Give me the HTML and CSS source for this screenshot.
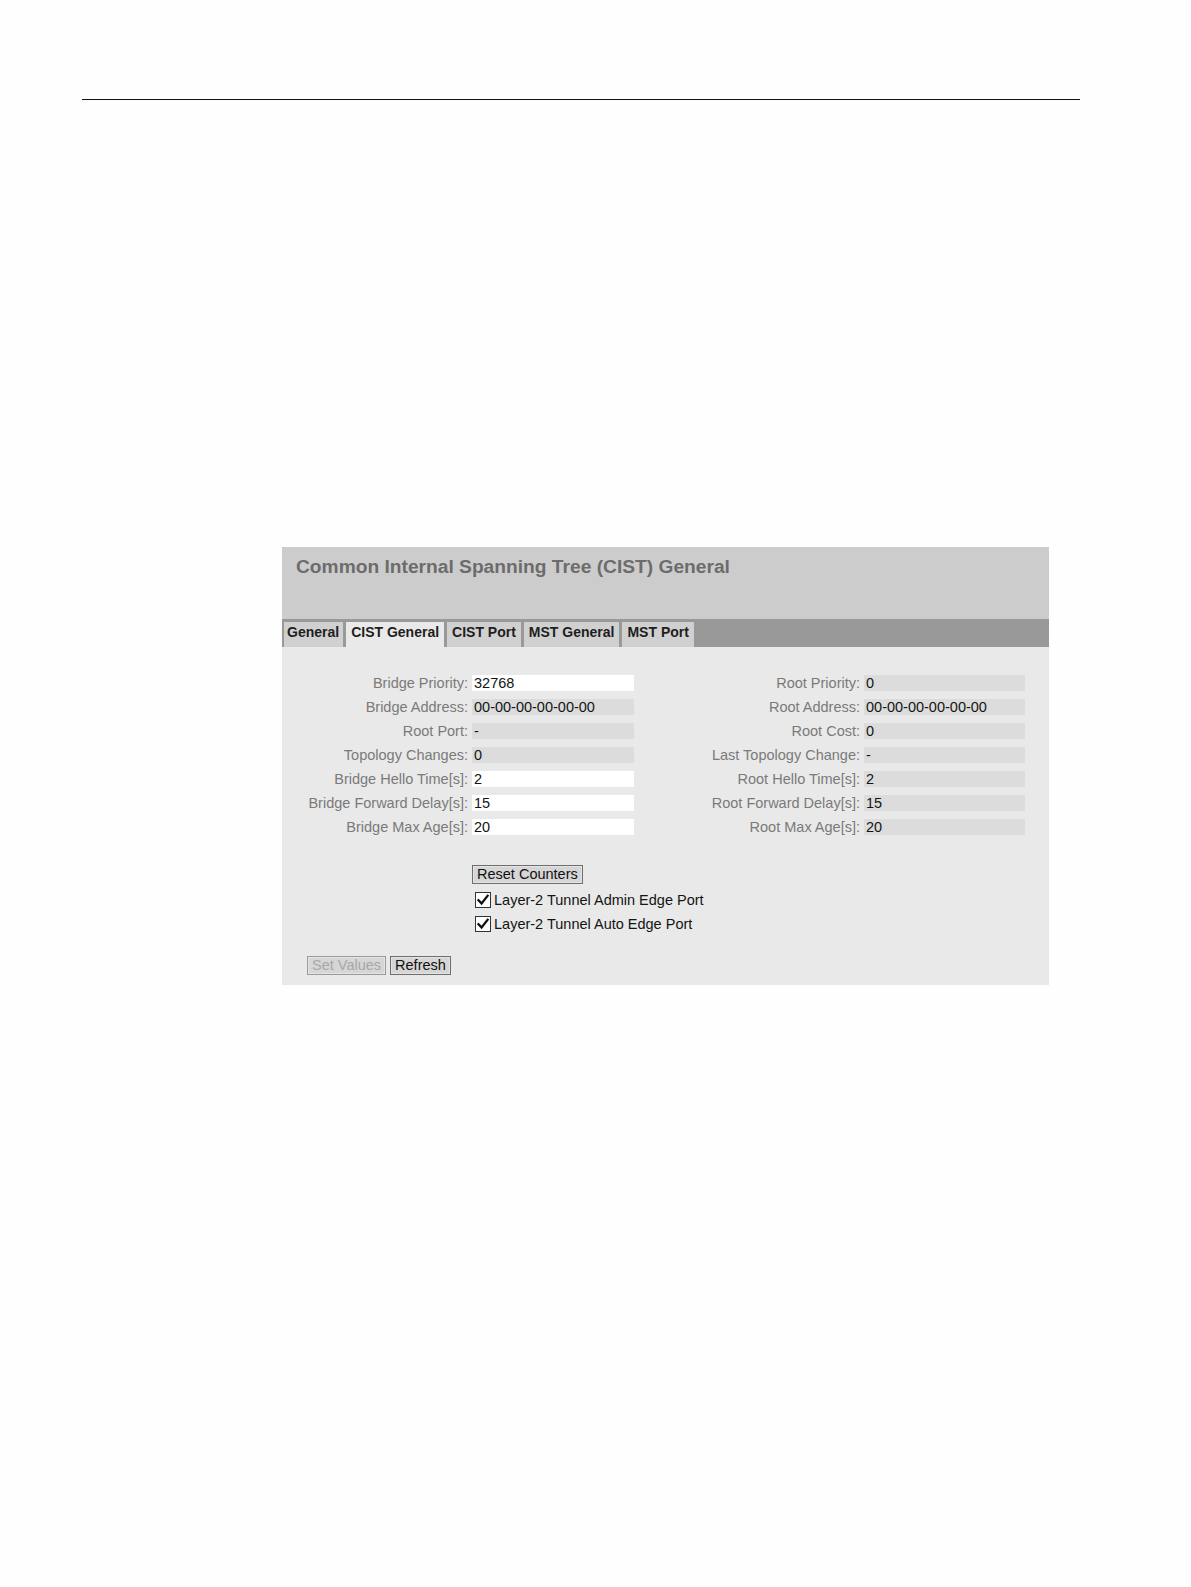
FILE: index.html
```html
<!DOCTYPE html>
<html lang="en">
<head>
<meta charset="utf-8">
<title>CIST General</title>
<link rel="stylesheet" href="styles.css">
</head>
<body>
<div class="page">
  <div class="rule"></div>
  <div class="panel">
    <div class="panel-head">
      <h1 class="title">Common Internal Spanning Tree (CIST) General</h1>
    </div>
    <div class="tabbar">
      <span class="tab">General</span>
      <span class="tab active">CIST General</span>
      <span class="tab">CIST Port</span>
      <span class="tab">MST General</span>
      <span class="tab">MST Port</span>
    </div>
    <div class="content">
      <div class="fields">
        <div class="col col-left">
          <span class="lbl">Bridge Priority:</span><span class="val edit">32768</span>
          <span class="lbl">Bridge Address:</span><span class="val ro">00-00-00-00-00-00</span>
          <span class="lbl">Root Port:</span><span class="val ro">-</span>
          <span class="lbl">Topology Changes:</span><span class="val ro">0</span>
          <span class="lbl">Bridge Hello Time[s]:</span><span class="val edit">2</span>
          <span class="lbl">Bridge Forward Delay[s]:</span><span class="val edit">15</span>
          <span class="lbl">Bridge Max Age[s]:</span><span class="val edit">20</span>
        </div>
        <div class="col col-right">
          <span class="lbl">Root Priority:</span><span class="val ro">0</span>
          <span class="lbl">Root Address:</span><span class="val ro">00-00-00-00-00-00</span>
          <span class="lbl">Root Cost:</span><span class="val ro">0</span>
          <span class="lbl">Last Topology Change:</span><span class="val ro">-</span>
          <span class="lbl">Root Hello Time[s]:</span><span class="val ro">2</span>
          <span class="lbl">Root Forward Delay[s]:</span><span class="val ro">15</span>
          <span class="lbl">Root Max Age[s]:</span><span class="val ro">20</span>
        </div>
      </div>
      <div class="actions">
        <button class="btn" type="button">Reset Counters</button>
        <label class="check"><span class="box"><svg viewBox="0 0 14 14" width="14" height="14"><path d="M2.5 7.2 L5.6 10.4 L11.6 2.8" fill="none" stroke="#111" stroke-width="2.3" stroke-linecap="square"/></svg></span>Layer-2 Tunnel Admin Edge Port</label>
        <label class="check"><span class="box"><svg viewBox="0 0 14 14" width="14" height="14"><path d="M2.5 7.2 L5.6 10.4 L11.6 2.8" fill="none" stroke="#111" stroke-width="2.3" stroke-linecap="square"/></svg></span>Layer-2 Tunnel Auto Edge Port</label>
      </div>
      <div class="footer">
        <button class="btn disabled" type="button">Set Values</button>
        <button class="btn" type="button">Refresh</button>
      </div>
    </div>
  </div>
</div>
</body>
</html>
```

FILE: styles.css
```css
html, body {
  margin: 0;
  padding: 0;
  background: #fefefe;
}

body {
  font-family: "Liberation Sans", Arial, sans-serif;
}

.page {
  padding: 99px 0 0 82px;
}

.rule {
  width: 998px;
  height: 0;
  border-top: 1.5px solid #111;
}

.panel {
  margin: 447px 0 0 200px;
  width: 767px;
  background: #e9e9e9;
}

.panel-head {
  height: 72px;
  background: #cccccc;
  padding: 9px 0 0 14px;
  box-sizing: border-box;
}

.title {
  margin: 0;
  font-size: 19.2px;
  line-height: 22px;
  font-weight: bold;
  color: #6c6c6c;
}

.tabbar {
  height: 28px;
  background: #999999;
  display: flex;
  align-items: flex-end;
  padding-left: 2px;
  gap: 3px;
  box-sizing: border-box;
}

.tab {
  height: 25px;
  line-height: 21px;
  padding: 0 5px;
  background: #d0d0d0;
  font-size: 14px;
  font-weight: bold;
  color: #1e1e1e;
  box-sizing: border-box;
}

.tab:first-child {
  padding: 0 4px 0 3px;
}

.tab.active {
  background: #e9e9e9;
  padding: 0 5px;
}

.content {
  padding: 24px 0 10px 0;
}

.fields {
  display: flex;
  gap: 35px;
}

.col {
  display: grid;
  grid-template-columns: 186px 162px;
  column-gap: 4px;
  grid-auto-rows: 24px;
  align-items: center;
  font-size: 14.5px;
}

.col-right {
  grid-template-columns: 191px 161px;
}

.lbl {
  text-align: right;
  color: #7a7a7a;
  white-space: nowrap;
}

.val {
  height: 16px;
  line-height: 16px;
  padding-left: 2px;
  color: #141414;
  box-sizing: border-box;
}

.val.edit {
  background: #ffffff;
}

.val.ro {
  background: #dcdcdc;
}

.actions {
  margin: 26px 0 0 190px;
  display: flex;
  flex-direction: column;
  align-items: flex-start;
}

.btn {
  font-family: "Liberation Sans", Arial, sans-serif;
  font-size: 14.5px;
  height: 19px;
  line-height: 15px;
  padding: 0 4px;
  margin: 0;
  background: #d6d6d6;
  border: 1px solid #6e6e6e;
  box-shadow: inset 0 0 0 1px #e4e4e4;
  color: #111;
  border-radius: 0;
}

.btn.disabled {
  color: #a8a8a8;
  border-color: #9a9a9a;
}

.actions .btn {
  margin-bottom: 4px;
}

.check {
  display: flex;
  align-items: center;
  height: 24px;
  font-size: 14.5px;
  color: #141414;
  padding-left: 3px;
}

.box {
  width: 14px;
  height: 14px;
  border: 1px solid #333;
  background: #fff;
  margin-right: 3px;
  display: flex;
  box-sizing: content-box;
}

.footer {
  margin: 20px 0 0 25px;
  display: flex;
  gap: 4px;
}
```
